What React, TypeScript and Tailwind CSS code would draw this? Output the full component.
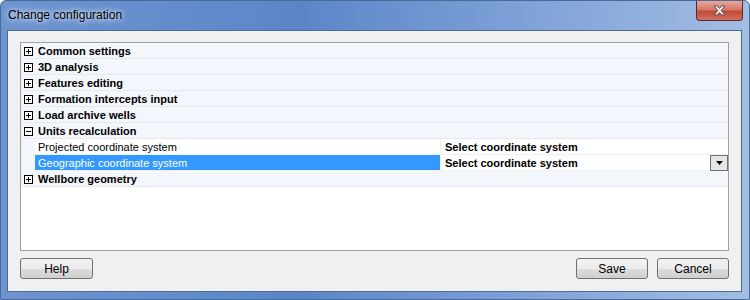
import React from 'react';

const font = "font-['Liberation_Sans',Arial,sans-serif]";

const categories = [
  'Common settings',
  '3D analysis',
  'Features editing',
  'Formation intercepts input',
  'Load archive wells',
];

const Box: React.FC<{ open?: boolean }> = ({ open }) => (
  <svg width="9" height="9" viewBox="0 0 9 9" className="shrink-0">
    <rect x="0.5" y="0.5" width="8" height="8" fill="#fff" stroke="#000" />
    <line x1="2" y1="4.5" x2="7" y2="4.5" stroke="#000" />
    {!open && <line x1="4.5" y1="2" x2="4.5" y2="7" stroke="#000" />}
  </svg>
);

const CategoryRow: React.FC<{ label: string; open?: boolean }> = ({ label, open }) => (
  <div className="h-[16px] flex items-center bg-[#f3f6fb] border-b border-[#e4e9f1] pl-[3px] pt-[1px] gap-[5px]">
    <Box open={open} />
    <span className="text-[11px] font-bold text-black leading-none">{label}</span>
  </div>
);

const PropRow: React.FC<{ name: string; selected?: boolean }> = ({ name, selected }) => (
  <div className="h-[16px] flex bg-[#f3f6fb]">
    <div className="w-[14px] shrink-0" />
    <div
      className={`w-[405px] shrink-0 flex items-center pl-[3px] pt-[1px] border-b border-[#eef1f6] ${
        selected ? 'bg-[#3399ff] text-white' : 'bg-white text-black'
      }`}
    >
      <span className="text-[11px] leading-none">{name}</span>
    </div>
    <div className="w-[1px] bg-[#eef1f6]" />
    <div className="flex-1 flex items-center justify-between bg-white border-b border-[#eef1f6] pl-[4px]">
      <span className="text-[11px] font-bold leading-none text-black pt-[1px]">Select coordinate system</span>
      {selected && (
        <div className="w-[18px] h-[16px] border border-[#707070] bg-[#e6e6e6] flex items-center justify-center">
          <svg width="7" height="4" viewBox="0 0 7 4">
            <path d="M0 0 H7 L3.5 4 Z" fill="#000" />
          </svg>
        </div>
      )}
    </div>
  </div>
);

const Button: React.FC<{ label: string; w: string }> = ({ label, w }) => (
  <button
    className={`${w} h-[21px] rounded-[3px] border border-[#707070] bg-[linear-gradient(#f2f2f2_0%,#ebebeb_50%,#dddddd_51%,#cfcfcf_100%)] text-[12px] text-black leading-none`}
  >
    {label}
  </button>
);

export default function App() {
  return (
    <div
      className={`${font} w-[750px] h-[300px] flex flex-col rounded-t-[6px] border border-[#4a6a9a] bg-[linear-gradient(90deg,#6d94d0_0%,#5a86c8_40%,#7ea1d7_70%,#a3bde3_100%)] overflow-hidden`}
    >
      {/* Title bar */}
      <div className="h-[29px] flex items-start justify-between relative">
        <span className="ml-[7px] mt-[8px] text-[12px] text-black leading-none [text-shadow:0_0_8px_rgba(255,255,255,0.9),0_0_4px_rgba(255,255,255,0.8)]">
          Change configuration
        </span>
        <div className="mr-[6px] w-[47px] h-[20px] rounded-b-[4px] border border-[#5a2a2a] border-t-0 bg-[linear-gradient(#e8a89c_0%,#d4786a_45%,#c24a38_55%,#d2705f_100%)] flex items-center justify-center">
          <svg width="13" height="11" viewBox="0 0 13 11">
            <path
              d="M1 1 L4 1 L6.5 3.5 L9 1 L12 1 L8 5.5 L12 10 L9 10 L6.5 7.5 L4 10 L1 10 L5 5.5 Z"
              fill="#fff"
              stroke="#3a3a3a"
              strokeWidth="0.8"
            />
          </svg>
        </div>
      </div>

      {/* Client area */}
      <div className="flex-1 ml-[6px] mr-[7px] mb-[7px] border border-[#4d6d99] bg-[#f0f0f0] flex flex-col px-[12px] pt-[11px] pb-[12px]">
        <div className="h-[209px] border border-[#a0a0a0] bg-white flex flex-col">
          {categories.map((c) => (
            <CategoryRow key={c} label={c} />
          ))}
          <CategoryRow label="Units recalculation" open />
          <PropRow name="Projected coordinate system" />
          <PropRow name="Geographic coordinate system" selected />
          <CategoryRow label="Wellbore geometry" />
        </div>
        <div className="flex justify-between mt-[7px]">
          <Button label="Help" w="w-[73px]" />
          <div className="flex gap-[9px]">
            <Button label="Save" w="w-[72px]" />
            <Button label="Cancel" w="w-[72px]" />
          </div>
        </div>
      </div>
    </div>
  );
}
